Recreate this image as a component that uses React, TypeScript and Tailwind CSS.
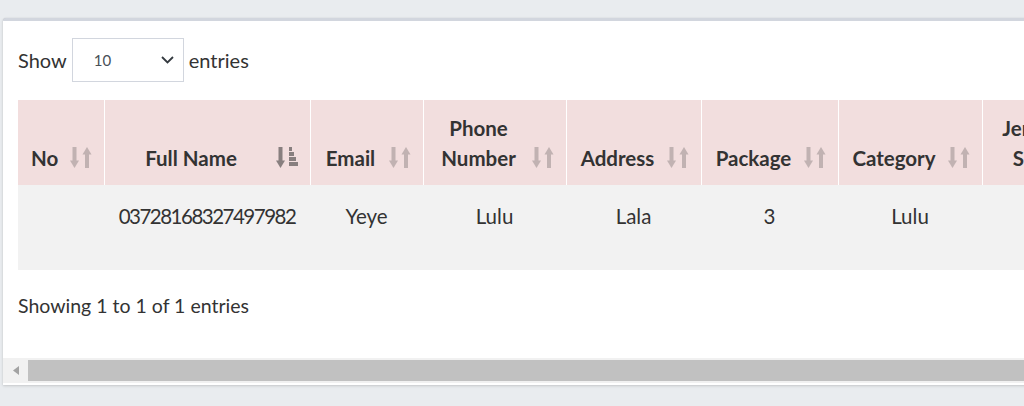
import React from "react";

type Col = { label: React.ReactNode; w: number; active?: boolean };

const cols: Col[] = [
  { label: "No", w: 86 },
  { label: "Full Name", w: 206, active: true },
  { label: "Email", w: 113 },
  { label: <>Phone<br />Number</>, w: 143 },
  { label: "Address", w: 135 },
  { label: "Package", w: 137 },
  { label: "Category", w: 144 },
  { label: <>Jersey<br />Size</>, w: 130 },
  { label: "Status", w: 130 },
];

const row = ["", "03728168327497982", "Yeye", "Lulu", "Lala", "3", "Lulu", "", ""];

function SortIcon() {
  return (
    <svg width="22" height="21" viewBox="0 0 22 21" className="opacity-[0.25]">
      <g fill="#333">
        <rect x="2.5" y="0" width="4" height="15" />
        <polygon points="0,13.5 9,13.5 4.5,21" />
        <rect x="15" y="6" width="4" height="15" />
        <polygon points="12.5,7.5 21.5,7.5 17,0" />
      </g>
    </svg>
  );
}

function ActiveIcon() {
  return (
    <svg width="22" height="21" viewBox="0 0 22 21" className="opacity-[0.55]">
      <g fill="#333">
        <rect x="2.5" y="0" width="4" height="15" />
        <polygon points="0,13.5 9,13.5 4.5,21" />
        <rect x="13" y="0" width="3" height="4" />
        <rect x="13" y="5" width="5" height="4" />
        <rect x="13" y="10" width="7" height="4" />
        <rect x="13" y="15" width="9" height="4" />
      </g>
    </svg>
  );
}

export default function App() {
  return (
    <div
      className="h-[406px] w-full overflow-hidden bg-[#e9ecef] pt-[18px] pl-[3px]"
      style={{ fontFamily: "Lato, 'Noto Sans', sans-serif" }}
    >
      <div className="w-[1200px] h-[367px] bg-white border-t-[3px] border-[#d2d6de] rounded-tl-[3px] shadow-[0_0_1px_rgba(0,0,0,0.15),0_1px_3px_rgba(0,0,0,0.15)] flex flex-col">
        <div className="flex items-center pl-[15px] pt-[17px] text-[20px] text-[#333]">
          <span>Show</span>
          <div className="ml-[5px] mr-[5px] w-[112px] h-[44px] border border-[#d2d6de] flex items-center justify-between pl-[21px] pr-[9px]">
            <span className="text-[15px] text-[#495057]">10</span>
            <svg width="13" height="8" viewBox="0 0 13 8">
              <polyline points="1,1 6.5,6.5 12,1" fill="none" stroke="#343a40" strokeWidth="1.8" />
            </svg>
          </div>
          <span>entries</span>
        </div>

        <div className="pl-[15px] mt-[18px]">
          <table className="table-fixed border-collapse text-[#333]" style={{ width: cols.reduce((a, c) => a + c.w, 0) }}>
            <colgroup>
              {cols.map((c, i) => (
                <col key={i} style={{ width: c.w }} />
              ))}
            </colgroup>
            <thead>
              <tr className="h-[85px] bg-[#f2dede]">
                {cols.map((c, i) => (
                  <th
                    key={i}
                    className="relative align-bottom pb-[12px] pl-[8px] pr-[40px] text-center font-bold text-[20.5px] leading-[30px] border-r border-white"
                  >
                    {c.label}
                    <span className="absolute right-[12px] bottom-[17px] flex">
                      {c.active ? <ActiveIcon /> : <SortIcon />}
                    </span>
                  </th>
                ))}
              </tr>
            </thead>
            <tbody>
              <tr className="h-[85px] bg-[#f2f2f2]">
                {row.map((v, i) => (
                  <td
                    key={i}
                    className={
                      i === 1
                        ? "align-top pt-[16px] px-[8px] text-center text-[20.5px] tracking-[-1.5px] leading-[30px]"
                        : "align-top pt-[16px] px-[8px] text-center text-[20.5px] leading-[30px]"
                    }
                  >
                    {v}
                  </td>
                ))}
              </tr>
            </tbody>
          </table>
        </div>

        <div className="pl-[15px] mt-[21px] text-[19.5px] leading-[30px] text-[#333]">
          Showing 1 to 1 of 1 entries
        </div>

        <div className="mt-auto mb-[2px] h-[25px] bg-[#f1f1f1] flex items-center pt-[2px] pb-[2px]">
          <div className="w-[25px] h-full flex items-center justify-center">
            <svg width="6" height="9" viewBox="0 0 6 9">
              <polygon points="6,0 6,9 0,4.5" fill="#a3a3a3" />
            </svg>
          </div>
          <div className="flex-1 h-full bg-[#c1c1c1]" />
        </div>
      </div>
    </div>
  );
}
